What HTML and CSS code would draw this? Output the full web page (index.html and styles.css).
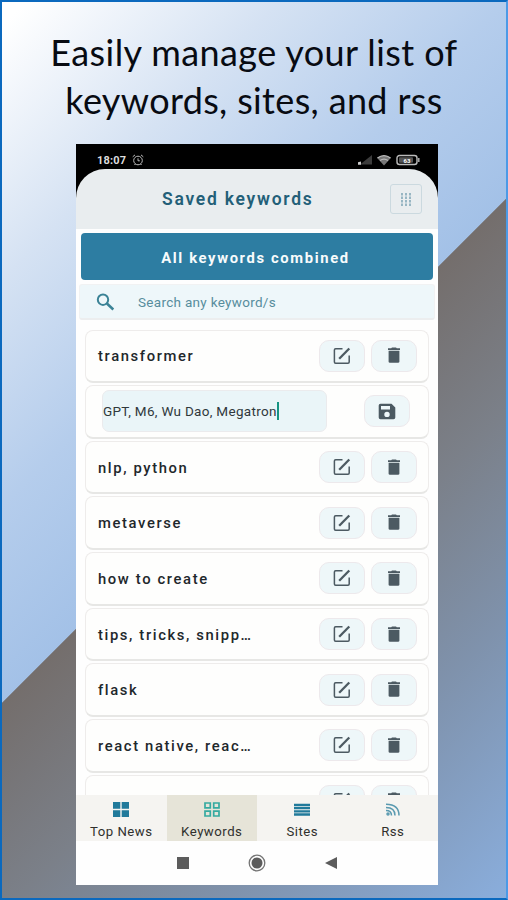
FILE: index.html
```
<!DOCTYPE html>
<html lang="en">
<head>
<meta charset="utf-8">
<title>Saved keywords</title>
<link rel="stylesheet" href="styles.css">
</head>
<body>
<svg class="defs" aria-hidden="true">
  <symbol id="edit" viewBox="0 0 18 18"><path d="M9.500 1.800H2.600Q1.400 1.800 1.400 3V15Q1.400 16.200 2.600 16.200H15Q16.200 16.200 16.200 15V8.500" fill="none" stroke="currentColor" stroke-width="1.500"/><path d="M6.200 11.700L16.300 1.500" stroke="currentColor" stroke-width="2.300"/></symbol>
  <symbol id="trash" viewBox="0 0 14 17"><path d="M1 1.300H4.200L5 .6H9L9.800 1.300H13V3.100H1ZM1.600 3.700H12.400V14.700Q12.400 15.800 11 15.800H3Q1.600 15.800 1.600 14.700Z" fill="currentColor"/></symbol>
</svg>
<main class="poster">
  <h1 class="headline"><span class="line1">Easily manage your list of</span><br><span class="line2">keywords, sites, and rss</span></h1>
  <section class="phone">
    <div class="top">
      <div class="status">
        <span class="time">18:07</span>
        <svg class="alarm" width="12" height="12" viewBox="0 0 12 12" fill="none" stroke="#bbb"><circle cx="6" cy="6.500" r="4.300"/><path d="M6 4.300V6.800H7.800M.7 2.800L3 .9M11.300 2.800L9 .9M2.500 11L3.300 10M9.500 11L8.700 10"/></svg>
        <svg class="signals" width="64" height="12" viewBox="0 0 64 12">
          <path d="M3 10.500L15 1V10.500Z" fill="#3c3c3c"/><path d="M1 10.800V8.300L4 7.500V10.800Z" fill="#ccc"/>
          <path d="M20 3.800Q27 -1.500 34 3.800L27 11.500Z" fill="#777"/><path d="M20.500 4Q27 -.8 33.500 4M23 6.600Q27 3.800 31 6.600" fill="none" stroke="#bbb" stroke-width="1.200"/>
          <rect x="40" y="1.500" width="20" height="9" rx="2.500" fill="none" stroke="#bbb" stroke-width="1.400"/><rect x="42" y="3.300" width="14" height="5.400" rx="1" fill="#555"/><path d="M61.800 4V8" stroke="#aaa" stroke-width="1.500"/>
          <text x="50" y="8.700" class="battery">63</text>
        </svg>
      </div>
      <header class="header">
        <h2 class="title">Saved keywords</h2>
        <span class="grid-button"><svg width="12" height="13" viewBox="0 0 12 13"><path d="M2 0V13M6 0V13M10 0V13" stroke="#8fb0be" stroke-width="1.800" stroke-dasharray="2.400 1.100"/></svg></span>
      </header>
    </div>
    <div class="banner">All keywords combined</div>
    <div class="search">
      <svg width="19" height="18" viewBox="0 0 19 18" fill="none" stroke="#3b8396"><circle cx="7" cy="6.700" r="5.200" stroke-width="2"/><path d="M10.900 10.500L17.300 16.500" stroke-width="2.500"/></svg>
      <span>Search any keyword/s</span>
    </div>
    <ul class="list">
      <li class="row"><span class="name">transformer</span><span class="button"><svg class="edit"><use href="#edit"/></svg></span><span class="button"><svg class="trash"><use href="#trash"/></svg></span></li>
      <li class="row editing"><span class="field"><span class="value">GPT, M6, Wu Dao, Megatron</span><i class="caret"></i></span><span class="button save"><svg width="18" height="17" viewBox="0 0 18 17"><path fill="currentColor" fill-rule="evenodd" d="M2.500 .8H13.500L17.300 4.500V14.500Q17.300 16.300 15.500 16.300H2.500Q.7 16.300 .7 14.500V2.600Q.7 .8 2.500 .8ZM3 3V6.500H12V3ZM9 8.700A2.700 2.700 0 1 0 9 14.100A2.700 2.700 0 1 0 9 8.700Z"/></svg></span></li>
      <li class="row"><span class="name">nlp, python</span><span class="button"><svg class="edit"><use href="#edit"/></svg></span><span class="button"><svg class="trash"><use href="#trash"/></svg></span></li>
      <li class="row"><span class="name">metaverse</span><span class="button"><svg class="edit"><use href="#edit"/></svg></span><span class="button"><svg class="trash"><use href="#trash"/></svg></span></li>
      <li class="row"><span class="name">how to create</span><span class="button"><svg class="edit"><use href="#edit"/></svg></span><span class="button"><svg class="trash"><use href="#trash"/></svg></span></li>
      <li class="row"><span class="name">tips, tricks, snipp…</span><span class="button"><svg class="edit"><use href="#edit"/></svg></span><span class="button"><svg class="trash"><use href="#trash"/></svg></span></li>
      <li class="row"><span class="name">flask</span><span class="button"><svg class="edit"><use href="#edit"/></svg></span><span class="button"><svg class="trash"><use href="#trash"/></svg></span></li>
      <li class="row"><span class="name">react native, reac…</span><span class="button"><svg class="edit"><use href="#edit"/></svg></span><span class="button"><svg class="trash"><use href="#trash"/></svg></span></li>
      <li class="row"><span class="name"></span><span class="button"><svg class="edit"><use href="#edit"/></svg></span><span class="button"><svg class="trash"><use href="#trash"/></svg></span></li>
    </ul>
    <nav class="tabs">
      <div class="tab"><svg width="16" height="15" viewBox="0 0 16 15" fill="#217a9b"><path d="M0 0H7.300V6.700H0ZM8.700 0H16V6.700H8.700ZM0 8.200H7.300V15H0ZM8.700 8.200H16V15H8.700Z"/></svg><span>Top News</span></div>
      <div class="tab active"><svg width="16" height="15" viewBox="0 0 16 15" fill="none" stroke="#35aaa0" stroke-width="1.700"><path d="M1 1H6.300V5.800H1ZM9.700 1H15V5.800H9.700ZM1 9.200H6.300V14H1ZM9.700 9.200H15V14H9.700Z"/></svg><span>Keywords</span></div>
      <div class="tab"><svg width="16" height="15" viewBox="0 0 16 15" stroke="#217a9b" stroke-width="2.300"><path d="M0 3H16M0 6.200H16M0 9.400H16M0 12.500H16"/></svg><span>Sites</span></div>
      <div class="tab"><svg width="16" height="15" viewBox="0 0 16 15" fill="none" stroke="#5a9ab0" stroke-width="1.500"><circle cx="3" cy="12" r="1"/><path d="M1 8.500Q6.500 8.500 6.500 13.500M1 5.400Q10 5.400 10 13.500M1 2.200Q14 2.200 14 13.500"/></svg><span>Rss</span></div>
    </nav>
    <footer class="system">
      <svg width="12" height="12"><rect width="12" height="12" fill="#5c5c5c"/></svg>
      <svg width="18" height="18" viewBox="0 0 18 18"><circle cx="9" cy="9" r="7.800" fill="none" stroke="#757575" stroke-width="1.300"/><circle cx="9" cy="9" r="5.500" fill="#5c5c5c"/></svg>
      <svg width="12" height="12" viewBox="0 0 12 12"><path d="M0 6L12 0V12Z" fill="#5c5c5c"/></svg>
    </footer>
  </section>
</main>
</body>
</html>
```

FILE: styles.css
```
* { box-sizing: border-box; }
body { margin: 0; font-family: Roboto, sans-serif; }
svg { display: block; flex: none; }
.defs { width: 0; height: 0; position: absolute; }
.poster {
  width: 508px; height: 900px; overflow: hidden;
  display: flex; flex-direction: column; align-items: center;
  border: 2px solid #0b69be; border-right: 2px solid #4c9ae6;
  background: linear-gradient(135deg, #fff 0%, #fff 2%, #d5e2f3 20%, #b5cdec 36%, #a3c1e7 50%, #746e6c 50.100%, #7b8089 65%, #7f92ac 80%, #8aaedd 100%) border-box;
}
.headline {
  margin: 26px 0 0; height: 116px; font: 400 36px/48px Lato, sans-serif; color: #080b12;
  text-align: center; white-space: nowrap;
}
.line1 { letter-spacing: .4px; }
.line2 { letter-spacing: .35px; }
.phone {
  width: 362px; height: 741px; margin-left: 6px; background: #fefefe; overflow: hidden;
  display: flex; flex-direction: column; flex: none;
}
.top { background: linear-gradient(#000 54px, #e9edef 54px); flex: none; }
.status { height: 25px; display: flex; align-items: center; padding: 7px 17px 0 21px; }
.time { color: #ddd; font-size: 11px; font-weight: 700; letter-spacing: .2px; margin-right: 6px; }
.signals { margin-left: auto; }
.battery { font: 700 6px Roboto, sans-serif; fill: #fff; text-anchor: middle; }
.header {
  height: 60px; border-radius: 29px 29px 0 0; background: #e9edef;
  display: flex; justify-content: space-between; align-items: center; padding: 0 16px 0 86px;
}
.title { margin: 0; font-size: 17.500px; font-weight: 600; letter-spacing: 1.750px; color: #235f78; white-space: nowrap; }
.grid-button {
  width: 32px; height: 30px; border: 1px solid #cbd9df; border-radius: 3px;
  display: flex; align-items: center; justify-content: center;
}
.banner {
  flex: none; height: 47px; margin: 4px 5px 0; border-radius: 4px; background: #2d7da2; color: #f7fbfc;
  display: flex; align-items: center; justify-content: center; padding: 2px 3px 0 0;
  font-size: 14.800px; font-weight: 700; letter-spacing: 1.630px;
}
.search {
  flex: none; height: 36px; margin: 4px 3px 0; padding: 0 17px 0 16px; border-radius: 3px;
  border: 1px solid #f1f2f3; border-bottom: 2px solid #eceeef; background: #eef7fa;
  display: flex; align-items: center; gap: 23px; color: #578d9d; font-size: 13.500px; letter-spacing: .3px;
}
.list { margin: 9.500px 9px 0; padding: 0; list-style: none; height: 465.500px; flex: none; overflow: hidden; display: flex; flex-direction: column; gap: 2px; }
.row {
  flex: none; height: 53.650px; border: 1.500px solid #eeeceb; border-bottom: 2px solid #e7e7e5; border-radius: 8px;
  background: #fefefd; padding: 0 11px 0 12px; display: flex; align-items: center; gap: 6px; color: #4c5a62;
}
.name { flex: 1; font-size: 14.800px; font-weight: 500; letter-spacing: 1.620px; color: #1e282c; white-space: nowrap; padding-top: 1px; }
.button { flex: none; width: 46px; height: 32px; border: 1px solid #ede9ec; border-radius: 10px; background: #eef7f9; display: flex; align-items: center; justify-content: center; }
.edit { width: 18px; height: 18px; }
.trash { width: 14px; height: 17px; }
.editing { padding: 0 18px 0 16px; justify-content: space-between; }
.field { width: 225px; height: 42px; border: 1px solid #ebebed; border-radius: 7px; background: #eaf5f8; display: flex; align-items: center; }
.value { font-size: 13.500px; letter-spacing: .3px; color: #30383c; white-space: nowrap; }
.caret { width: 2px; height: 18px; background: #169482; }
.tabs { flex: none; height: 46px; display: grid; grid-template-columns: repeat(4, 1fr); background: #f5f4f1; }
.tab { display: flex; flex-direction: column; align-items: center; padding-top: 7px; gap: 7px; font-size: 13.200px; line-height: 15px; letter-spacing: .5px; color: #30302d; }
.active { background: #e6e4d8; }
.system { height: 44px; display: flex; align-items: center; justify-content: center; gap: 59px; padding-right: 1px; }
```
